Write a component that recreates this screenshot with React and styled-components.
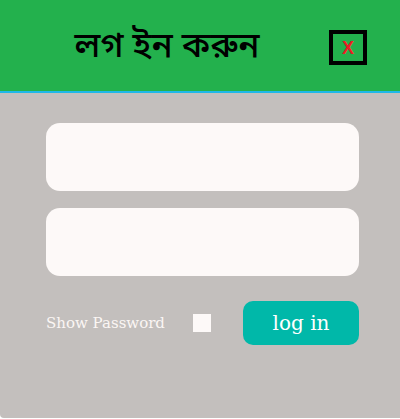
import React, { useState } from 'react'
import styled, { createGlobalStyle } from 'styled-components'

const GlobalStyle = createGlobalStyle`
  body {
    margin: 0;
    background: #ffffff;
    font-family: "DejaVu Serif", serif;
  }
`

const Modal = styled.div`
  width: 400px;
  height: 418px;
  background: #c3bfbd;
  border-bottom-left-radius: 4px;
  display: flex;
  flex-direction: column;
`

const Header = styled.div`
  height: 91px;
  background: #23b14d;
  border-bottom: 2px solid #1fb8e8;
  display: flex;
  align-items: center;
  position: relative;
`

const Title = styled.h1`
  margin: 0;
  padding-top: 4px;
  flex: 1;
  text-align: center;
  padding-right: 66px;
  font-family: "Noto Sans Bengali", "Noto Sans", "DejaVu Sans", sans-serif;
  font-size: 35px;
  font-weight: 500;
  color: #000000;
`

const CloseButton = styled.button`
  position: absolute;
  left: 329px;
  top: 30px;
  width: 38px;
  height: 35px;
  box-sizing: border-box;
  border: 4px solid #000000;
  background: transparent;
  color: #ed1c24;
  font-family: "Liberation Sans", sans-serif;
  font-size: 18px;
  font-weight: 700;
  line-height: 1;
  padding: 0;
  cursor: pointer;
`

const Body = styled.div`
  padding: 30px 41px 0 46px;
  display: flex;
  flex-direction: column;
  gap: 17px;
`

const Field = styled.input`
  height: 68px;
  box-sizing: border-box;
  border: none;
  border-radius: 14px;
  background: #fdf9f8;
  outline: none;
  padding: 0 16px;
  font-size: 18px;
`

const Row = styled.div`
  display: flex;
  align-items: center;
  margin-top: 8px;
`

const Label = styled.label`
  font-family: "DejaVu Serif", serif;
  font-size: 15px;
  color: #fbf6f4;
  width: 147px;
`

const Check = styled.span`
  width: 18px;
  height: 18px;
  background: #fdf9f8;
  display: inline-block;
`

const LoginButton = styled.button`
  margin-left: auto;
  width: 116px;
  height: 44px;
  border: none;
  border-radius: 10px;
  background: #00b8a9;
  color: #ffffff;
  font-family: "DejaVu Serif", serif;
  font-size: 20px;
  cursor: pointer;
`

const App = () => {
  const [show, setShow] = useState(false)

  return (
    <>
      <GlobalStyle />
      <Modal>
        <Header>
          <Title>লগ ইন করুন</Title>
          <CloseButton>X</CloseButton>
        </Header>
        <Body>
          <Field type="text" />
          <Field type={show ? 'text' : 'password'} />
          <Row>
            <Label onClick={() => setShow(!show)}>Show Password</Label>
            <Check onClick={() => setShow(!show)} />
            <LoginButton>log in</LoginButton>
          </Row>
        </Body>
      </Modal>
    </>
  )
}

export default App
